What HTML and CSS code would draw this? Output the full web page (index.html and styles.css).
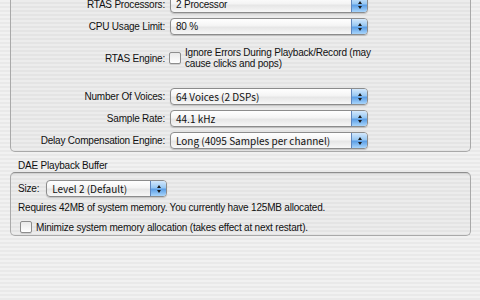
FILE: index.html
```html
<!DOCTYPE html>
<html lang="en">
<head>
    <meta charset="UTF-8">
    <meta name="viewport" content="width=device-width, initial-scale=1.0">
    <title>Playback Engine</title>
    <link rel="stylesheet" href="styles.css">
</head>
<body>

<!-- Engine settings -->
<div class="group top-group">
    <div class="form-grid">
        <span class="field-label">RTAS Processors:</span>
        <div class="popup">
            <span class="popup-value">2 Processor</span>
            <span class="popup-arrows"></span>
        </div>

        <span class="field-label">CPU Usage Limit:</span>
        <div class="popup">
            <span class="popup-value">80 %</span>
            <span class="popup-arrows"></span>
        </div>

        <span class="field-label spaced">RTAS Engine:</span>
        <label class="check-field spaced">
            <span class="checkbox"></span>
            <span class="check-text">Ignore Errors During Playback/Record (may<br>cause clicks and pops)</span>
        </label>

        <span class="field-label">Number Of Voices:</span>
        <div class="popup">
            <span class="popup-value osaka">64 Voices (2 DSPs)</span>
            <span class="popup-arrows"></span>
        </div>

        <span class="field-label">Sample Rate:</span>
        <div class="popup">
            <span class="popup-value osaka">44.1 kHz</span>
            <span class="popup-arrows"></span>
        </div>

        <span class="field-label">Delay Compensation Engine:</span>
        <div class="popup">
            <span class="popup-value osaka">Long (4095 Samples per channel)</span>
            <span class="popup-arrows"></span>
        </div>
    </div>
</div>

<!-- DAE buffer -->
<div class="section-title">DAE Playback Buffer</div>
<div class="group buffer-group">
    <div class="size-row">
        <span>Size:</span>
        <div class="popup size-popup">
            <span class="popup-value osaka">Level 2 (Default)</span>
            <span class="popup-arrows"></span>
        </div>
    </div>
    <p class="info">Requires 42MB of system memory. You currently have 125MB allocated.</p>
    <label class="check-field minimize">
        <span class="checkbox"></span>
        <span class="check-text">Minimize system memory allocation (takes effect at next restart).</span>
    </label>
</div>

</body>
</html>
```

FILE: styles.css
```css
html, body {
    margin: 0;
    padding: 0;
    height: 100%;
    overflow: hidden;
}

/* Aqua pinstripe window */
body {
    font-family: "Liberation Sans", Arial, sans-serif;
    font-size: 10px;
    letter-spacing: -0.2px;
    line-height: 11px;
    color: #111;
    background: repeating-linear-gradient(to bottom, #f1f1f1 0, #f1f1f1 2px, #e9e9e9 2px, #e9e9e9 4px);
}

/* Group boxes */
.group {
    border: 1px solid #a9a9a9;
    background: rgba(0, 0, 0, 0.02);
}

.top-group {
    margin: 0 9px 0 10px;
    border-top: none;
    border-radius: 0 0 5px 5px;
    padding-bottom: 2px;
}

.buffer-group {
    margin: 1px 9px 0 10px;
    border-top-color: #8e8e8e;
    border-radius: 5px;
    padding: 7px 7px 2px 7px;
    box-shadow: inset 0 1px 0 #d2d2d2;
}

.section-title {
    margin: 8px 0 0 18px;
    line-height: 11px;
}

/* Label / control grid */
.form-grid {
    display: grid;
    grid-template-columns: 154px 198px;
    column-gap: 5px;
    row-gap: 5px;
    align-items: center;
    margin-top: -4px;
}

.field-label {
    text-align: right;
    white-space: nowrap;
}

.spaced {
    margin: 7px 0 14px 0;
}

/* Popup buttons */
.popup {
    display: flex;
    height: 17px;
    box-sizing: border-box;
    border: 1px solid #8c8c8c;
    border-radius: 4px;
    background: linear-gradient(to bottom, #ffffff 0%, #f4f4f4 45%, #e6e6e6 55%, #f7f7f7 100%);
    box-shadow: 0 1px 1px rgba(0, 0, 0, 0.18);
    overflow: hidden;
}

.popup-value {
    flex: 1;
    padding-left: 5px;
    line-height: 15px;
    white-space: nowrap;
}

.popup-value.osaka {
    font-family: "Noto Sans CJK JP", "Liberation Sans", sans-serif;
    letter-spacing: 0;
}

.popup-arrows {
    width: 15px;
    display: flex;
    flex-direction: column;
    align-items: center;
    justify-content: center;
    gap: 2px;
    border-left: 1px solid #5f86bd;
    background: linear-gradient(to bottom, #d3e8fc 0%, #98c8f3 45%, #5c9fe6 55%, #a9d5fb 100%);
}

.popup-arrows::before,
.popup-arrows::after {
    content: "";
    width: 0;
    height: 0;
    border-left: 2.5px solid transparent;
    border-right: 2.5px solid transparent;
}

.popup-arrows::before {
    border-bottom: 3px solid #1a1a1a;
}

.popup-arrows::after {
    border-top: 3px solid #1a1a1a;
}

/* Checkboxes */
.check-field {
    display: flex;
    align-items: center;
    gap: 4px;
}

.check-text {
    white-space: nowrap;
}

.top-group .check-field {
    margin-left: -1px;
}

.checkbox {
    flex: none;
    width: 12px;
    height: 12px;
    box-sizing: border-box;
    border: 1px solid #8d8d8d;
    border-radius: 2px;
    background: linear-gradient(to bottom, #e9e9e9, #ffffff);
    box-shadow: 0 1px 0 rgba(0, 0, 0, 0.12);
}

/* Buffer section */
.size-row {
    display: flex;
    align-items: center;
    gap: 7px;
}

.size-popup {
    width: 121px;
}

.info {
    margin: 5px 0 0 0;
}

.minimize {
    margin: 8px 0 0 2px;
    height: 12px;
}
```
